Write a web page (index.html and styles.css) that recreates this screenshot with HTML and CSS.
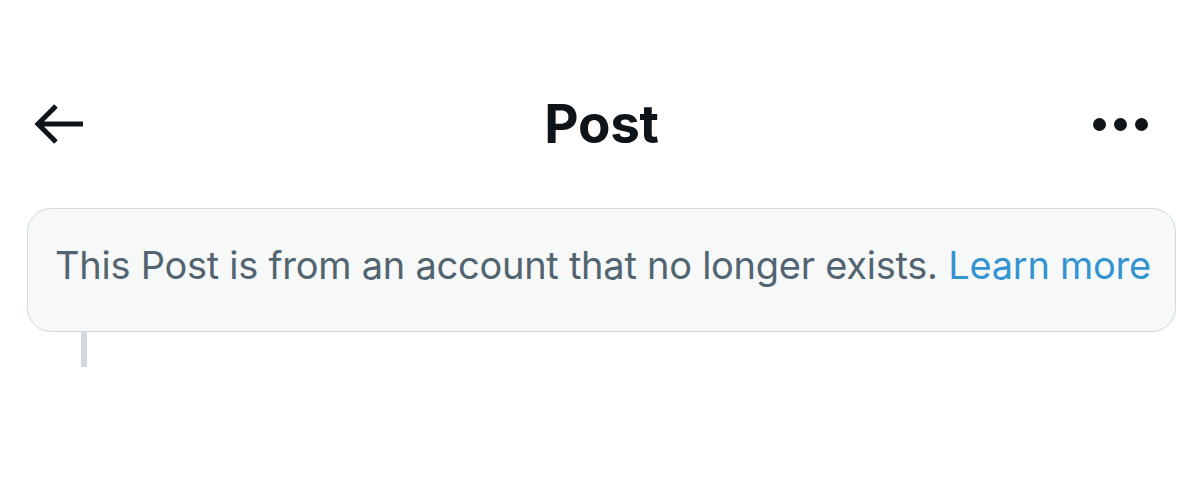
FILE: index.html
```html
<!DOCTYPE html>
<html>
<head>
<meta charset="utf-8">
<link rel="stylesheet" href="styles.css">
</head>
<body>
<header class="topbar">
  <button class="icon-btn back" aria-label="Back">
    <svg width="50" height="44" viewBox="0 0 50 44"><path d="M49 22H5M22 4L4 22l18 18" fill="none" stroke="#0f1419" stroke-width="5"/></svg>
  </button>
  <h1 class="title">Post</h1>
  <button class="icon-btn more" aria-label="More">
    <span class="dot"></span><span class="dot"></span><span class="dot"></span>
  </button>
</header>
<main class="content">
  <div class="notice">
    <p class="notice-text">This Post is from an account that no longer exists. <a class="link" href="#">Learn more</a></p>
  </div>
  <div class="thread-line"></div>
</main>
</body>
</html>
```
FILE: styles.css
```css
* { box-sizing: border-box; }
html, body { margin: 0; background: #ffffff; }
body { font-family: Inter, "Noto Sans", sans-serif; color: #0f1419; }
.topbar {
  margin-top: 74px;
  height: 100px;
  display: flex;
  align-items: center;
  justify-content: space-between;
  padding: 0 52px 0 34px;
}
.icon-btn { background: none; border: 0; padding: 0; display: flex; align-items: center; }
.title { margin: 0 0 0 26px; font-size: 53px; font-weight: 700; letter-spacing: -0.3px; }
.more { gap: 8px; }
.dot { width: 13px; height: 13px; border-radius: 50%; background: #0f1419; display: block; }
.content { padding: 34px 24px 0 27px; }
.notice {
  height: 124px;
  border: 1.5px solid #cfd9de;
  border-radius: 24px;
  background: #f7f9f9;
  display: flex;
  align-items: center;
  padding: 0 26px 10px 27px;
}
.notice-text { margin: 0; font-size: 38px; line-height: 46px; color: #536471; white-space: nowrap; letter-spacing: -0.26px; }
.link { color: #3494d1; text-decoration: none; }
.thread-line { width: 6px; height: 35px; margin-left: 54px; background: #d3d9de; }
```
